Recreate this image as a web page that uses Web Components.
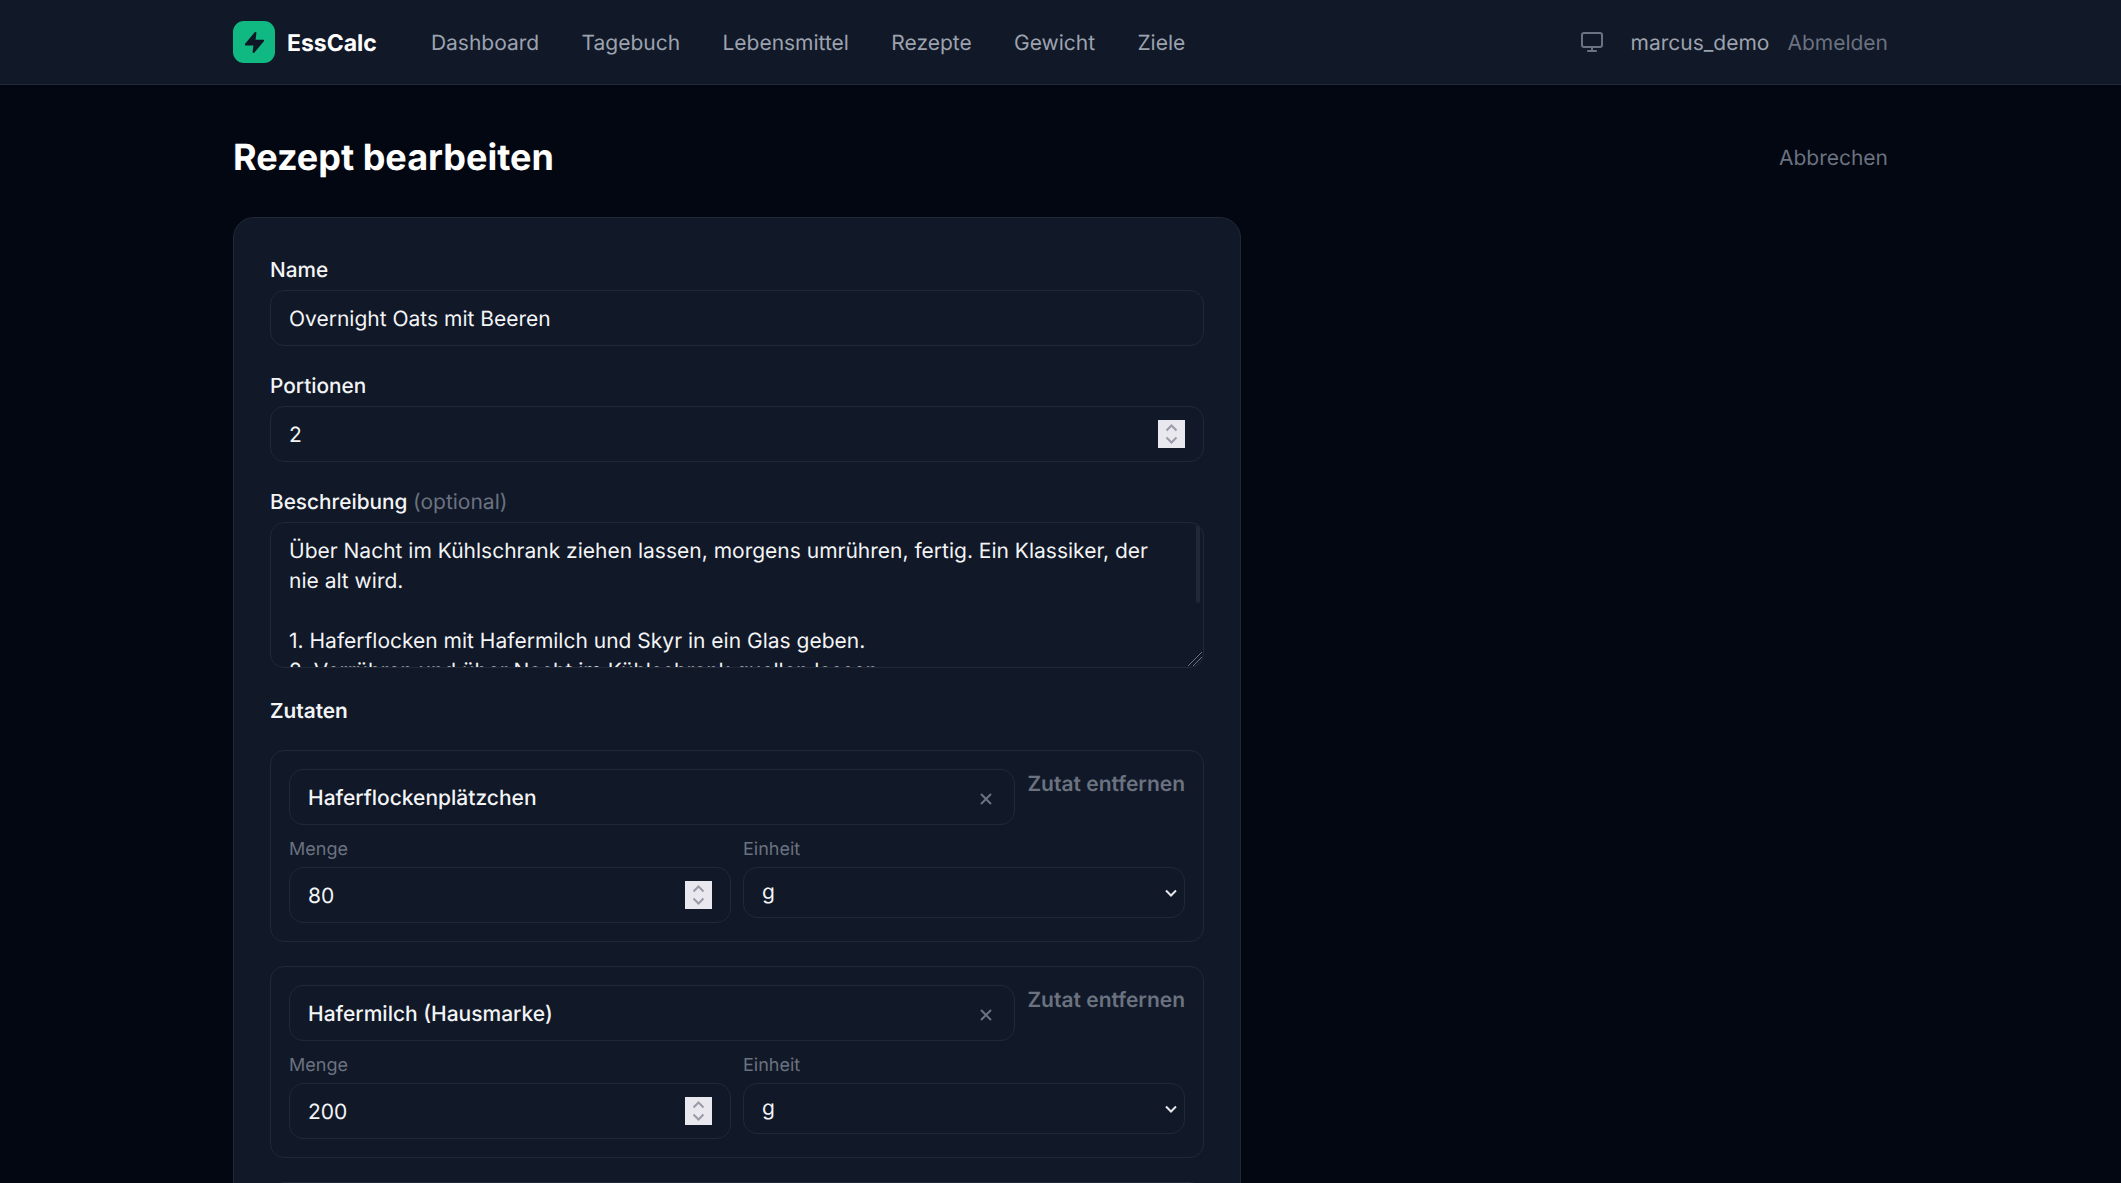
<!DOCTYPE html>
<html lang="de"><head><meta charset="utf-8"><title>EssCalc</title>
<style>
html,body{margin:0;height:100%;overflow:hidden;background:#030712;color:#f3f4f6;font-family:Inter,"Liberation Sans",sans-serif;text-rendering:geometricPrecision}
</style></head><body>
<app-nav></app-nav>
<page-main>
  <page-head slot="head">Rezept bearbeiten</page-head>
  <form-card>
    <form-field label="Name"><text-box>Overnight Oats mit Beeren</text-box></form-field>
    <form-field label="Portionen"><text-box number>2</text-box></form-field>
    <form-field label="Beschreibung" hint="(optional)"><text-area>Über Nacht im Kühlschrank ziehen lassen, morgens umrühren, fertig. Ein Klassiker, der nie alt wird.

1. Haferflocken mit Hafermilch und Skyr in ein Glas geben.
2. Verrühren und über Nacht im Kühlschrank quellen lassen.</text-area></form-field>
    <ingredient-list>
      <ingredient-row name="Haferflockenplätzchen" amount="80"></ingredient-row>
      <ingredient-row name="Hafermilch (Hausmarke)" amount="200"></ingredient-row>
      <ingredient-row></ingredient-row>
    </ingredient-list>
  </form-card>
</page-main>
<script>
const def=(name,html,init)=>customElements.define(name,class extends HTMLElement{
  constructor(){super();this.attachShadow({mode:'open'}).innerHTML=html}
  connectedCallback(){init&&init(this,this.shadowRoot)}
});
def('app-nav',`<style>
:host{display:block;height:84px;background:#111827;border-bottom:1px solid #1f2937}
.in{box-sizing:border-box;height:84px;width:1655px;margin-left:233px;display:flex;align-items:center;font-size:21px;color:#9ca3af;padding-top:3px}
.logo{width:42px;height:42px;border-radius:11px;background:#10b981;display:flex;align-items:center;justify-content:center;margin-right:12px;margin-top:-3px}
.brand{font-size:23px;font-weight:700;color:#fff;margin-right:54px;margin-top:-2px}
nav{display:flex;gap:42.3px;flex:1}
.mon{display:block;margin-right:26px;margin-top:-3px}
.ab{color:#6b7280;margin-left:18px}
</style><div class="in">
<div class="logo"><svg width="23" height="23" viewBox="0 0 24 24" fill="#0f1726" stroke="#0f1726" stroke-width="2" stroke-linejoin="round" stroke-linecap="round"><path d="M13 2 3 14h9l-1 8 10-12h-9l1-8z"/></svg></div>
<div class="brand">EssCalc</div>
<nav><span>Dashboard</span><span>Tagebuch</span><span>Lebensmittel</span><span>Rezepte</span><span>Gewicht</span><span>Ziele</span></nav>
<svg class="mon" width="24" height="24" viewBox="0 0 24 24" fill="none" stroke="#6b7280" stroke-width="2" stroke-linecap="round" stroke-linejoin="round"><rect x="2" y="3" width="20" height="14" rx="2"/><path d="M8 21h8M12 17v4"/></svg>
<span>marcus_demo</span><span class="ab">Abmelden</span>
</div>`);
def('page-main',`<style>
:host{display:block;width:1655px;margin-left:233px;padding-top:51px}
</style><slot name="head"></slot><slot></slot>`);
def('page-head',`<style>
:host{display:flex;justify-content:space-between;align-items:center;height:42px;margin-bottom:39px}
h1{margin:0;font-size:36px;font-weight:700;color:#fff;line-height:42px}
span{font-size:21px;color:#6b7280;padding-top:2px}
</style><h1><slot></slot></h1><span>Abbrechen</span>`);
def('form-card',`<style>
:host{display:block;box-sizing:border-box;width:1008px;background:#111827;border:1px solid #1f2937;border-radius:21px;padding:38px 36px 36px;display:flex;flex-direction:column;gap:26px}
</style><slot></slot>`);
def('form-field',`<style>
:host{display:block}
label{display:block;font-size:20.8px;font-weight:500;line-height:28px;padding-top:1px;margin-bottom:5px;color:#f3f4f6}
small{font-size:21px;font-weight:400;color:#6b7280}
</style><label></label><slot></slot>`,(el,s)=>{
  const l=s.querySelector('label');l.textContent=el.getAttribute('label');
  if(el.hasAttribute('hint')){const h=document.createElement('small');h.textContent=el.getAttribute('hint');l.append(' ',h)}
});
def('spin-button',`<style>:host{display:block;width:27px;height:28px;flex:none}svg{display:block}</style>
<svg width="27" height="28" viewBox="0 0 27 28"><rect width="27" height="28" fill="#e8e8ee"/><path d="M8.5 10.5l5-5 5 5M8.5 17.5l5 5 5-5" fill="none" stroke="#9c9aa9" stroke-width="2"/></svg>`);
def('text-box',`<style>
:host{display:flex;box-sizing:border-box;height:56px;align-items:center;justify-content:space-between;padding:0 18px;border:1px solid #1f2937;border-radius:14px;background:#111827;font-size:21px;color:#f3f4f6}
.v{padding-top:2px}
</style><span class="v"><slot></slot></span><span id="end"></span>`,(el,s)=>{
  if(el.hasAttribute('number')) s.getElementById('end').innerHTML='<spin-button></spin-button>';
});
def('text-area',`<style>
:host{display:block;position:relative;box-sizing:border-box;height:146px;overflow:hidden;border:1px solid #1f2937;border-radius:14px;background:#111827;font-size:21px;line-height:30px;color:#f3f4f6}
.t{padding:14px 42px 0 18px;white-space:pre-wrap;margin:0}
.bar{position:absolute;top:2px;right:3px;width:4px;height:78px;background:#1f2937;border-radius:2px}
svg{position:absolute;right:0;bottom:0;display:block}
</style><div class="t"><slot></slot></div><div class="bar"></div>
<svg width="16" height="16" viewBox="0 0 16 16" fill="none" stroke="#6b7280" stroke-width="1"><path d="M1 15 15 1M6 15l9-9M11 15l4-4"/></svg>`);
def('ingredient-list',`<style>
:host{display:block;padding-top:3px}
h3{margin:0 0 24px;padding-top:1px;font-size:20.8px;font-weight:600;line-height:28px;color:#f3f4f6}
.l{display:flex;flex-direction:column;gap:24px}
</style><h3>Zutaten</h3><div class="l"><slot></slot></div>`);
def('ingredient-row',`<style>
:host{display:block;box-sizing:border-box;height:192px;padding:18px;border:1px solid #1f2937;border-radius:14px}
.top{display:flex;gap:12px;align-items:flex-start}
.food{flex:1;display:flex;align-items:center;justify-content:space-between;box-sizing:border-box;height:56px;padding:0 21px 0 18px;border:1px solid #1f2937;border-radius:14px;font-size:21px;font-weight:500;color:#f3f4f6}
.food span{padding-top:2px}
.food svg{display:block;margin-top:4px}
.rm{flex:none;font-size:21px;font-weight:600;color:#6b7280;line-height:28px;white-space:nowrap;margin-top:2px}
.grid{display:grid;grid-template-columns:1fr 1fr;gap:12px;margin-top:12px}
.lab{font-size:18px;color:#6b7280;line-height:25px;margin-bottom:5px}
.sel{box-sizing:border-box;height:51px;display:flex;align-items:center;justify-content:space-between;padding:0 5px 0 18px;border:1px solid #1f2937;border-radius:14px;font-size:21px;color:#f3f4f6}
.sel span{padding-bottom:1px}
.sel svg{display:block}
</style><div id="c"></div>`,(el,s)=>{
  if(!el.hasAttribute('name'))return;
  s.getElementById('c').innerHTML=`<div class="top"><div class="food"><span>${el.getAttribute('name')}</span>
  <svg width="14" height="14" viewBox="0 0 14 14" fill="none" stroke="#6b7280" stroke-width="2"><path d="M2 2l10 10M12 2 2 12"/></svg></div><div class="rm">Zutat entfernen</div></div>
  <div class="grid"><div><div class="lab">Menge</div><text-box number>${el.getAttribute('amount')}</text-box></div>
  <div><div class="lab">Einheit</div><div class="sel"><span>g</span><svg width="16" height="16" viewBox="0 0 16 16" fill="none" stroke="#e5e7eb" stroke-width="2"><path d="M3 5.5l5 5 5-5"/></svg></div></div></div>`;
});
</script>
</body></html>
